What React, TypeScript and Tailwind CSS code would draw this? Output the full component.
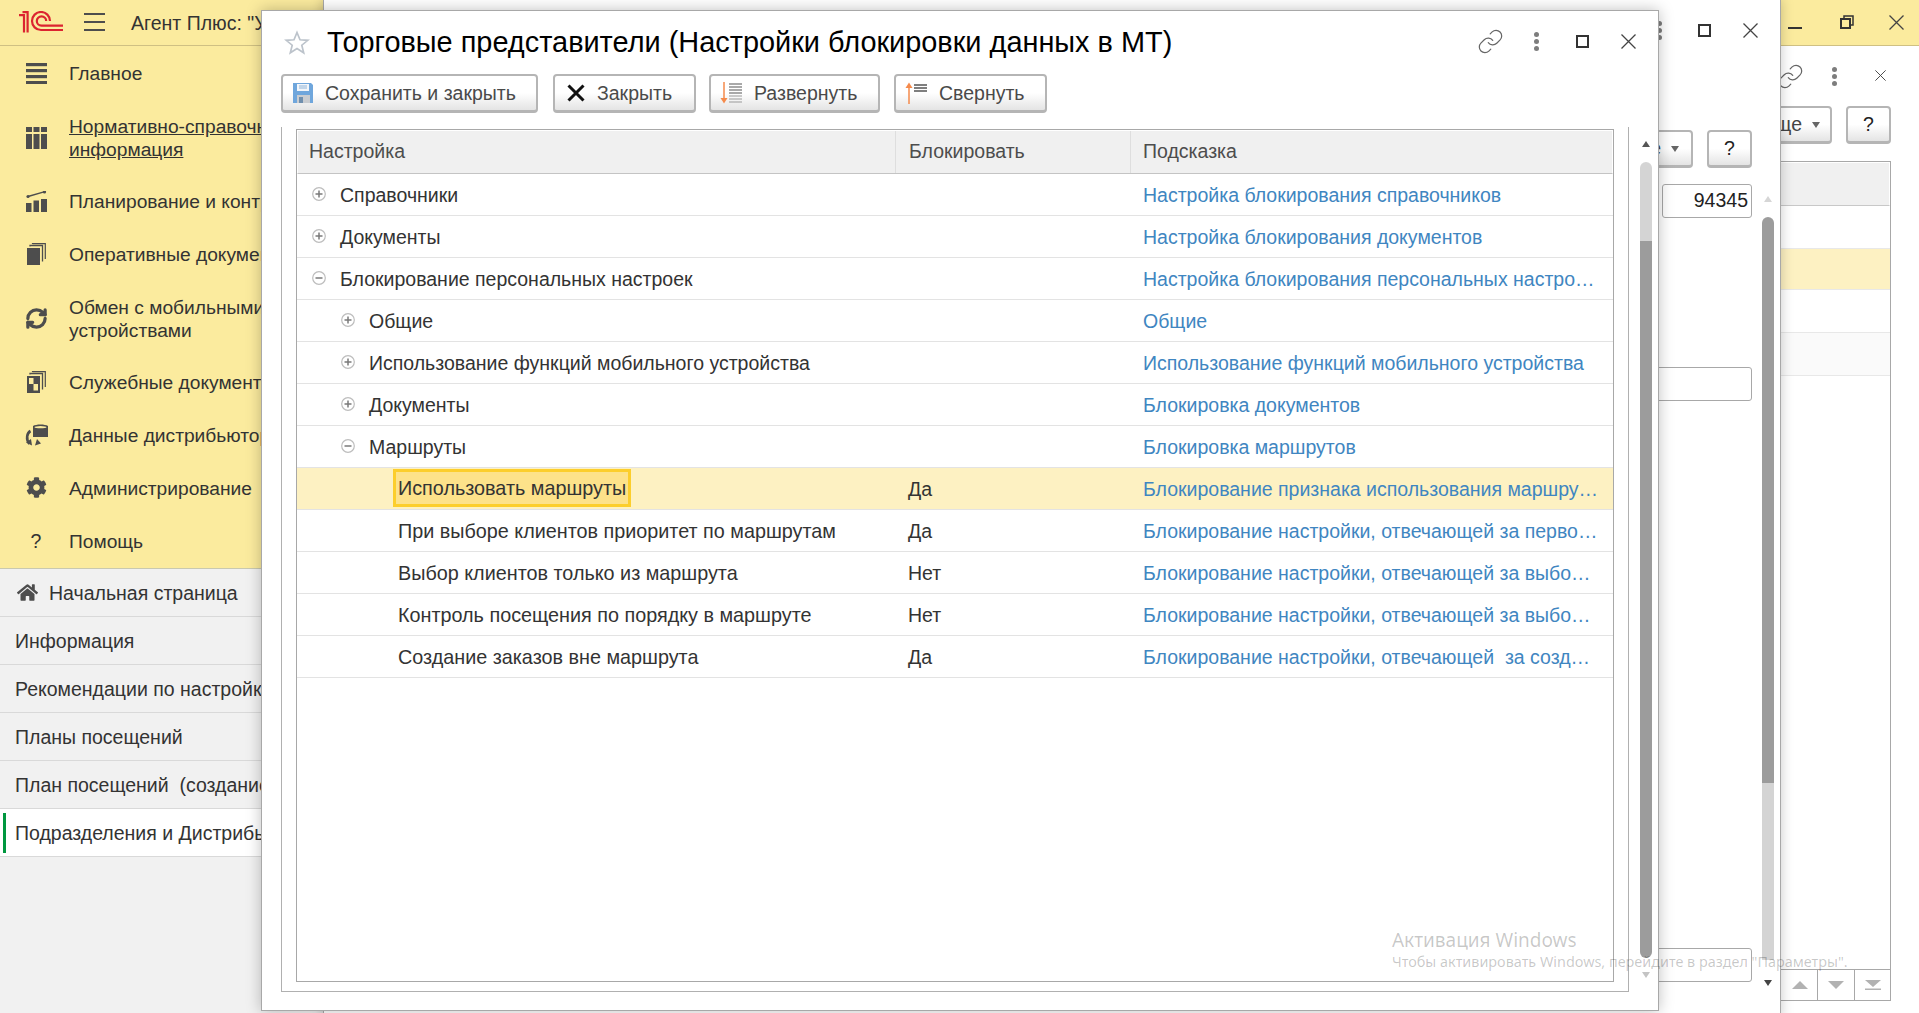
import React from "react";
import { Link as LinkIcon, RefreshCw } from "lucide-react";
import { FaCog, FaHome } from "react-icons/fa";

const sideItems: { label: React.ReactNode; h: string; icon: React.ReactNode }[] = [
  { label: "Главное", h: "h-[54px]", icon: <MainIcon /> },
  { label: <span className="underline">Нормативно-справочная<br />информация</span>, h: "h-[75px]", icon: <RefIcon /> },
  { label: "Планирование и контроль", h: "h-[52px]", icon: <PlanIcon /> },
  { label: "Оперативные документы", h: "h-[54px]", icon: <DocsIcon /> },
  { label: <span>Обмен с мобильными<br />устройствами</span>, h: "h-[74px]", icon: <RefreshCw size={23} strokeWidth={3.4} className="text-[#4d4d4d]" /> },
  { label: "Служебные документы", h: "h-[54px]", icon: <ServiceIcon /> },
  { label: "Данные дистрибьюторов", h: "h-[52px]", icon: <DataIcon /> },
  { label: "Администрирование", h: "h-[53px]", icon: <FaCog size={21} className="text-[#4d4d4d]" /> },
  { label: "Помощь", h: "h-[54px]", icon: <span className="text-[19.5px] text-[#333]">?</span> },
];

const tabs = ["Информация", "Рекомендации по настройке", "Планы посещений", "План посещений  (создание)"];

type Row = { level: number; mark?: "+" | "-"; name: string; block?: string; hint: string };
const rows: Row[] = [
  { level: 0, mark: "+", name: "Справочники", hint: "Настройка блокирования справочников" },
  { level: 0, mark: "+", name: "Документы", hint: "Настройка блокирования документов" },
  { level: 0, mark: "-", name: "Блокирование персональных настроек", hint: "Настройка блокирования персональных настро…" },
  { level: 1, mark: "+", name: "Общие", hint: "Общие" },
  { level: 1, mark: "+", name: "Использование функций мобильного устройства", hint: "Использование функций мобильного устройства" },
  { level: 1, mark: "+", name: "Документы", hint: "Блокировка документов" },
  { level: 1, mark: "-", name: "Маршруты", hint: "Блокировка маршрутов" },
  { level: 2, name: "Использовать маршруты", block: "Да", hint: "Блокирование признака использования маршру…" },
  { level: 2, name: "При выборе клиентов приоритет по маршрутам", block: "Да", hint: "Блокирование настройки, отвечающей за перво…" },
  { level: 2, name: "Выбор клиентов только из маршрута", block: "Нет", hint: "Блокирование настройки, отвечающей за выбо…" },
  { level: 2, name: "Контроль посещения по порядку в маршруте", block: "Нет", hint: "Блокирование настройки, отвечающей за выбо…" },
  { level: 2, name: "Создание заказов вне маршрута", block: "Да", hint: "Блокирование настройки, отвечающей  за созд…" },
];

function MainIcon() {
  return (
    <svg width="21" height="21" viewBox="0 0 21 21" fill="#4d4d4d">
      <rect y="0" width="21" height="3.2" /><rect y="6" width="21" height="3.2" /><rect y="12" width="21" height="3.2" /><rect y="18" width="21" height="3" />
    </svg>
  );
}
function RefIcon() {
  return (
    <svg width="21" height="22" viewBox="0 0 21 22" fill="#4d4d4d">
      <path d="M0 0h6v5H0zM7.5 0h6v5h-6zM15 0h6v5h-6zM0 7h6v15H0zM7.5 7h6v15h-6zM15 7h6v15h-6z" />
    </svg>
  );
}
function PlanIcon() {
  return (
    <svg width="21" height="21" viewBox="0 0 21 21" fill="#4d4d4d">
      <path d="M0 12h5.5v9H0zM7.5 9.500h5.500V21H7.500zM15 8h6v13h-6z" />
      <path d="M2 5.500L18 0.800" stroke="#4d4d4d" strokeWidth="1.4" />
      <circle cx="2" cy="5.500" r="1.600" /><circle cx="18.500" cy="1" r="1.600" />
    </svg>
  );
}
function DocsIcon() {
  return (
    <svg width="19" height="22" viewBox="0 0 19 22" fill="none">
      <rect x="0" y="5" width="13" height="17" fill="#4d4d4d" />
      <path d="M3 3.500V2.500H15.500V18.500" stroke="#4d4d4d" strokeWidth="1.300" />
      <path d="M5.500 1V0.600H18.300V16" stroke="#4d4d4d" strokeWidth="1.200" />
    </svg>
  );
}
function ServiceIcon() {
  return (
    <svg width="19" height="22" viewBox="0 0 19 22" fill="none">
      <rect x="0" y="5" width="13" height="17" fill="#4d4d4d" />
      <rect x="2" y="7" width="4.500" height="6" fill="#fbeb9e" />
      <rect x="6.500" y="13" width="4.500" height="6.500" fill="#fbeb9e" />
      <path d="M3 3.500V2.500H15.500V18.500" stroke="#4d4d4d" strokeWidth="1.300" />
      <path d="M5.500 1V0.600H18.300V16" stroke="#4d4d4d" strokeWidth="1.200" />
    </svg>
  );
}
function DataIcon() {
  return (
    <svg width="23" height="22" viewBox="0 0 23 22" fill="none">
      <path d="M8 13H23V2C20 0 11 0 8 2Z" fill="#4d4d4d" />
      <ellipse cx="15.500" cy="3.200" rx="6" ry="1.100" fill="#fbeb9e" />
      <path d="M5.500 7C2 9 0.500 15 4.500 20" stroke="#4d4d4d" strokeWidth="2.600" />
      <path d="M1 18.500L7 21.500L6 15Z" fill="#4d4d4d" />
      <path d="M12 15L10 21.500L16 19.500Z" fill="#4d4d4d" />
    </svg>
  );
}
function Logo() {
  return (
    <svg width="44" height="22" viewBox="0 0 44 22" fill="none" stroke="#dc2430" strokeWidth="2.200">
      <path d="M0 4.200H5V21.500" />
      <path d="M3.500 1.200H8.600V21.500" />
      <path d="M44 19H22A9 9 0 1 1 31 10" />
      <path d="M44 14.700H22.500A4.700 4.700 0 1 1 27.200 10" />
    </svg>
  );
}
function Close({ size = 15 }: { size?: number }) {
  return (
    <svg width={size} height={size} viewBox="0 0 15 15" stroke="#444" strokeWidth="1.300" fill="none">
      <path d="M0.500 0.500L14.500 14.500M14.500 0.500L0.500 14.500" />
    </svg>
  );
}
function Dots() {
  return (
    <span className="flex flex-col gap-[2px]">
      <span className="w-[5px] h-[5px] rounded-full bg-[#7d7d7d]" />
      <span className="w-[5px] h-[5px] rounded-full bg-[#7d7d7d]" />
      <span className="w-[5px] h-[5px] rounded-full bg-[#7d7d7d]" />
    </span>
  );
}
function Square() {
  return <span className="block w-[13px] h-[13px] border-2 border-[#333]" />;
}
function Tri({ up, color }: { up?: boolean; color: string }) {
  return (
    <svg width="8" height="6" viewBox="0 0 8 6" fill={color}>
      <path d={up ? "M4 0L8 6H0Z" : "M0 0H8L4 6Z"} />
    </svg>
  );
}
function Btn({ w, children }: { w: string; children: React.ReactNode }) {
  return (
    <button className={`${w} h-[39px] flex items-center border-2 border-b-[3px] border-[#b5b5b5] rounded-[4px] bg-linear-to-b from-white via-white to-[#e4e4e4] text-[19.5px] text-[#4a4a4a] whitespace-nowrap`}>
      {children}
    </button>
  );
}
function TreeMark({ mark }: { mark: "+" | "-" }) {
  return (
    <svg width="14" height="14" viewBox="0 0 14 14" fill="none" className="shrink-0 -mt-[2px]">
      <circle cx="7" cy="7" r="6.300" stroke="#bdbdbd" strokeWidth="1.200" />
      <path d={mark === "+" ? "M3.500 7H10.500M7 3.500V10.500" : "M3.500 7H10.500"} stroke="#7a7a7a" strokeWidth="1.500" />
    </svg>
  );
}

function TreeRow({ row, selected }: { row: Row; selected: boolean }) {
  return (
    <div className={`grid grid-cols-[598px_235px_1fr] h-[42px] border-b border-[#e3e3e3] text-[19.5px] text-[#333] ${selected ? "bg-[#fdf1c2]" : ""}`}>
      <div className="flex items-center min-w-0">
        {row.level === 0 && <span className="w-[15px] shrink-0" />}
        {row.level === 1 && <span className="w-[44px] shrink-0" />}
        {row.mark && <TreeMark mark={row.mark} />}
        {row.mark && <span className="w-[14px] shrink-0" />}
        {row.level === 2 &&
          (selected ? (
            <span className="ml-[96px] mt-[1px] mb-[2px] self-stretch flex items-center border-[3px] border-[#fcce2c] bg-[#fde28a] px-[2px] pt-[2px] text-[19.8px] whitespace-nowrap">{row.name}</span>
          ) : (
            <span className="ml-[101px] pt-[2px] text-[19.8px] whitespace-nowrap">{row.name}</span>
          ))}
        {row.level < 2 && <span className="pt-[2px] whitespace-nowrap">{row.name}</span>}
      </div>
      <div className="flex items-center pl-[13px] pt-[2px]">{row.block}</div>
      <div className="flex items-center pl-[13px] pt-[2px] text-[#3f86c1] whitespace-pre overflow-hidden">{row.hint}</div>
    </div>
  );
}

export default function App() {
  return (
    <div className="relative w-[1919px] h-[1013px] overflow-hidden bg-white text-[#333] font-['Liberation_Sans',Arial,sans-serif]">
      {/* top bar */}
      <header className="h-[46px] bg-[#fbeb9e] border-b border-[#cfc083] flex items-center">
        <span className="ml-[19px] -mt-[1px]"><Logo /></span>
        <span className="ml-[21px] w-[21px] flex flex-col gap-[6px] -mt-[1px]">
          <span className="h-[2px] bg-[#4d4d4d]" /><span className="h-[2px] bg-[#4d4d4d]" /><span className="h-[2px] bg-[#4d4d4d]" />
        </span>
        <span className="ml-[26px] pt-[2px] text-[19.5px] text-[#333] whitespace-nowrap">Агент Плюс: "У</span>
        <div className="ml-auto flex items-center pr-[15px]">
          <span className="block w-[14px] h-[2px] bg-[#333] mt-[11px]" />
          <svg width="14" height="14" viewBox="0 0 14 14" fill="none" stroke="#333" strokeWidth="2" className="ml-[38px] -mt-[1px]">
            <rect x="1" y="4" width="9" height="9" /><path d="M4 4V1H13V10H10" strokeWidth="1.500" />
          </svg>
          <span className="ml-[35px] -mt-[1px]"><Close /></span>
        </div>
      </header>

      <div className="flex h-[967px]">
        {/* sidebar */}
        <aside className="w-[324px] shrink-0 flex flex-col bg-[#f1f1f1] overflow-hidden">
          <nav className="h-[523px] bg-[#fbeb9e] border-b border-[#c9c9b0] text-[19.2px] leading-[23px]">
            {sideItems.map((it, i) => (
              <div key={i} className={`${it.h} flex items-center`}>
                <span className="w-[72px] pl-[6px] pr-[6px] shrink-0 flex justify-center">{it.icon}</span>
                <span className="-ml-[3px] pt-[1px] whitespace-nowrap">{it.label}</span>
              </div>
            ))}
          </nav>
          <div className="h-[48px] flex items-center border-b border-[#d9d9d9] text-[19.5px]">
            <FaHome size={21} className="ml-[17px] text-[#4d4d4d]" />
            <span className="ml-[11px] pt-[2px]">Начальная страница</span>
          </div>
          {tabs.map((t) => (
            <div key={t} className="h-[48px] flex items-center pl-[15px] pt-[2px] border-b border-[#d9d9d9] text-[19.5px] whitespace-pre">{t}</div>
          ))}
          <div className="relative h-[48px] flex items-center pl-[15px] pt-[2px] bg-white border-b border-[#d9d9d9] text-[19.5px] whitespace-nowrap">
            <span className="absolute left-[3px] top-[4px] bottom-[3px] w-[3px] bg-[#00973f]" />
            Подразделения и Дистрибьюторы
          </div>
        </aside>

        {/* page behind the dialogs */}
        <main className="flex-1 min-w-0 pr-[28px]">
          <div className="h-[60px] flex items-center justify-end pr-[2px]">
            <LinkIcon size={27} strokeWidth={1.1} className="text-[#666] mr-[28px]" />
            <Dots />
            <span className="ml-[38px] mr-[3px] -mt-[1px]"><Close size={11} /></span>
          </div>
          <div className="flex justify-end gap-[14px]">
            <button className="h-[38px] w-[120px] flex items-center justify-end gap-[10px] pr-[10px] border-2 border-b-[3px] border-[#b5b5b5] rounded-[4px] bg-linear-to-b from-white via-white to-[#e4e4e4] text-[19.5px] text-[#444]">
              Еще <Tri color="#666" />
            </button>
            <button className="w-[45px] h-[38px] border-2 border-b-[3px] border-[#b5b5b5] rounded-[4px] bg-linear-to-b from-white via-white to-[#e4e4e4] text-[19.5px] text-[#222]">?</button>
          </div>
          <div className="mt-[17px] h-[840px] border border-[#a8a8a8] flex flex-col">
            <div className="h-[44px] bg-[#f0f0f0] border border-white border-b-[#c8c8c8]" />
            <div className="h-[43px] border-b border-[#e8e8e8]" />
            <div className="h-[41px] bg-[#fdf1c2] border-b border-[#e8e8e8]" />
            <div className="h-[43px] border-b border-[#e8e8e8]" />
            <div className="h-[43px] bg-[#fafafa] border-b border-[#e8e8e8]" />
            <div className="flex-1" />
            <div className="h-[31px] border-t border-[#a8a8a8] flex justify-end">
              <span className="w-[36px] border-r border-[#a8a8a8] flex items-center justify-center"><svg width="16" height="8"><path d="M8 0L16 8H0Z" fill="#b2b2b2" /></svg></span>
              <span className="w-[37px] border-r border-[#a8a8a8] flex items-center justify-center"><svg width="16" height="8"><path d="M0 0H16L8 8Z" fill="#b2b2b2" /></svg></span>
              <span className="w-[35px] flex items-center justify-center"><svg width="16" height="10"><path d="M0 0H16L8 7Z M0 8.500H16V10H0Z" fill="#b2b2b2" /></svg></span>
            </div>
          </div>
        </main>
      </div>

      {/* dialog behind */}
      <section className="absolute left-[323px] -top-[1px] w-[1458px] h-[1020px] bg-white border border-[#a8a8a8] shadow-[0_0_12px_rgba(0,0,0,0.22)]">
        <div className="h-[61px] flex items-center justify-end pr-[22px]">
          <Dots />
          <span className="ml-[36px]"><Square /></span>
          <span className="ml-[32px]"><Close /></span>
        </div>
        <div className="flex justify-end gap-[10px] pr-[6px] h-[957px]">
          <div className="w-[400px] pt-[69px] flex flex-col items-end">
            <div className="flex gap-[14px]">
              <button className="h-[38px] w-[120px] flex items-center justify-end gap-[10px] pr-[12px] border-2 border-b-[3px] border-[#b5b5b5] rounded-[4px] bg-linear-to-b from-white via-white to-[#e4e4e4] text-[19.5px] text-[#444]">
                Еще <Tri color="#666" />
              </button>
              <button className="w-[45px] h-[38px] border-2 border-b-[3px] border-[#b5b5b5] rounded-[4px] bg-linear-to-b from-white via-white to-[#e4e4e4] text-[19.5px] text-[#222]">?</button>
            </div>
            <div className="mt-[16px] w-[90px] h-[34px] border border-[#a8a8a8] rounded-[3px] flex items-center justify-end pr-[3px] text-[19.5px] text-[#222]">94345</div>
            <div className="mt-[149px] w-[320px] h-[34px] border border-[#a8a8a8] rounded-[3px]" />
            <div className="mt-[547px] w-[320px] h-[34px] border border-[#a8a8a8] rounded-[3px]" />
          </div>
          <div className="w-[12px] pt-[135px] flex flex-col items-center">
            <Tri up color="#d6d6d6" />
            <div className="mt-[15px] w-[12px] h-[566px] rounded-t-full bg-[#9c9c9c]" />
            <div className="w-[12px] h-[177px] bg-[#d4d4d4]" />
            <div className="mt-[20px]"><Tri color="#444" /></div>
          </div>
        </div>
      </section>

      {/* active dialog */}
      <section className="absolute left-[261px] top-[10px] w-[1398px] h-[1001px] bg-white border border-[#a8a8a8] shadow-[0_0_14px_rgba(0,0,0,0.25)] flex flex-col">
        <div className="h-[63px] shrink-0 flex items-center pl-[22px] pr-[7px]">
          <svg width="26" height="25" viewBox="0 0 26 25" fill="none" stroke="#bcc3cb" strokeWidth="1.700">
            <path d="M13 2.500L16 9.800L23.800 10.300L17.800 15.200L19.700 22.800L13 18.600L6.300 22.800L8.200 15.200L2.200 10.300L10 9.800Z" />
          </svg>
          <h1 className="ml-[17px] text-[28.9px] leading-none text-black whitespace-nowrap">Торговые представители (Настройки блокировки данных в МТ)</h1>
          <div className="ml-auto -mt-[2px] flex items-center">
            <span className="w-[46px] flex justify-center"><LinkIcon size={27} strokeWidth={1.1} className="text-[#666]" /></span>
            <span className="w-[46px] flex justify-center"><Dots /></span>
            <span className="w-[46px] flex justify-center"><Square /></span>
            <span className="w-[46px] flex justify-center"><Close /></span>
          </div>
        </div>

        <div className="h-[39px] shrink-0 flex pl-[19px]">
          <Btn w="w-[257px]">
            <svg width="20" height="20" viewBox="0 0 20 20" className="ml-[10px]">
              <path d="M0 0H18L20 2V20H0Z" fill="#6fa6dc" />
              <path d="M4 1H16V8H4Z" fill="#f3f6fa" />
              <path d="M6 3H14M6 5H14" stroke="#8fb4d8" strokeWidth="1" />
              <path d="M4 12H17V20H4Z" fill="#c9ccd0" />
              <path d="M6 14H10V20H6Z" fill="#6f8fae" />
            </svg>
            <span className="ml-[12px] pt-[2px]">Сохранить и закрыть</span>
          </Btn>
          <span className="w-[15px]" />
          <Btn w="w-[143px]">
            <svg width="18" height="18" viewBox="0 0 18 18" stroke="#111" strokeWidth="3" fill="none" className="ml-[12px]">
              <path d="M1.500 1.500L16.500 16.500M16.500 1.500L1.500 16.500" />
            </svg>
            <span className="ml-[12px] pt-[2px]">Закрыть</span>
          </Btn>
          <span className="w-[13px]" />
          <Btn w="w-[171px]">
            <svg width="22" height="22" viewBox="0 0 22 22" fill="none" className="ml-[9px]">
              <path d="M4 0V20" stroke="#f58a4b" strokeWidth="1.500" />
              <path d="M0.500 16L4 21.500L7.500 16Z" fill="#f58a4b" />
              <path d="M9 2H22M9 5H22M9 8H22M9 11H22" stroke="#555" strokeWidth="1.200" />
              <path d="M9 14H22M9 17H22M9 20H22" stroke="#999" strokeWidth="1.200" />
            </svg>
            <span className="ml-[12px] pt-[2px]">Развернуть</span>
          </Btn>
          <span className="w-[14px]" />
          <Btn w="w-[153px]">
            <svg width="22" height="22" viewBox="0 0 22 22" fill="none" className="ml-[9px] -mt-[1px]">
              <path d="M4 2V22" stroke="#f58a4b" strokeWidth="1.500" />
              <path d="M0.500 6L4 0.500L7.500 6Z" fill="#f58a4b" />
              <path d="M9 3H22M9 6H22M9 9H22" stroke="#555" strokeWidth="1.300" />
            </svg>
            <span className="ml-[12px] pt-[2px]">Свернуть</span>
          </Btn>
        </div>

        <div className="flex-1 min-h-0 flex pt-[14px] pb-[18px] pl-[19px]">
          <div className="w-[1348px] shrink-0 border-l border-r border-b border-[#b0b0b0] pl-[14px] pr-[14px] pt-[2px] pb-[9px]">
            <div className="h-full border border-[#a8a8a8]">
              <div className="grid grid-cols-[598px_235px_1fr] h-[44px] bg-[#f0f0f0] border border-white border-b-[#c4c4c4] text-[19.5px] text-[#4d4d4d]">
                <div className="flex items-center pl-[11px] border-r border-[#dedede]">Настройка</div>
                <div className="flex items-center pl-[13px] border-r border-[#dedede]">Блокировать</div>
                <div className="flex items-center pl-[12px]">Подсказка</div>
              </div>
              {rows.map((r, i) => (
                <TreeRow key={i} row={r} selected={i === 7} />
              ))}
            </div>
          </div>
          <div className="ml-[11px] w-[12px] flex flex-col items-center">
            <div className="mt-[14px]"><Tri up color="#555" /></div>
            <div className="mt-[15px] w-[12px] h-[79px] rounded-t-full bg-[#d4d4d4]" />
            <div className="w-[12px] h-[717px] rounded-b-full bg-[#9c9c9c]" />
            <div className="mt-[14px]"><Tri color="#c4c4c4" /></div>
          </div>
        </div>
      </section>

      {/* Windows activation watermark */}
      <div className="pointer-events-none absolute left-[1392px] top-[927px] font-['Noto_Sans',sans-serif] text-[rgba(0,0,0,0.22)]">
        <div className="text-[19px] leading-[26px]">Активация Windows</div>
        <div className="text-[14.4px] leading-[18px] whitespace-nowrap">Чтобы активировать Windows, перейдите в раздел "Параметры".</div>
      </div>
    </div>
  );
}
